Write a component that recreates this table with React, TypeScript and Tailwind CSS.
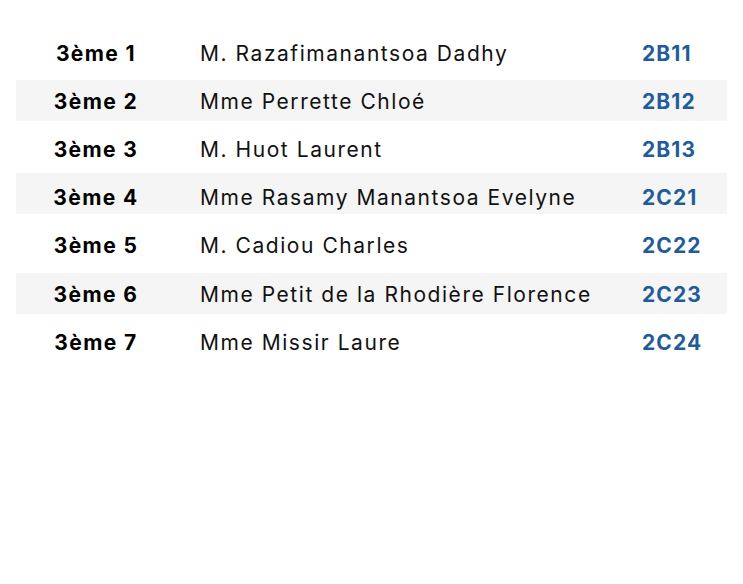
import React from "react";

const rows = [
  { c: "3ème 1", n: "M. Razafimanantsoa Dadhy", r: "2B11", gray: false, h: "h-[48px]", pt: "pt-[10px]" },
  { c: "3ème 2", n: "Mme Perrette Chloé", r: "2B12", gray: true, h: "h-[41px]", pt: "pt-[10px]" },
  { c: "3ème 3", n: "M. Huot Laurent", r: "2B13", gray: false, h: "h-[52px]", pt: "pt-[17px]" },
  { c: "3ème 4", n: "Mme Rasamy Manantsoa Evelyne", r: "2C21", gray: true, h: "h-[41px]", pt: "pt-[13px]" },
  { c: "3ème 5", n: "M. Cadiou Charles", r: "2C22", gray: false, h: "h-[59px]", pt: "pt-[20px]" },
  { c: "3ème 6", n: "Mme Petit de la Rhodière Florence", r: "2C23", gray: true, h: "h-[41px]", pt: "pt-[10px]" },
  { c: "3ème 7", n: "Mme Missir Laure", r: "2C24", gray: false, h: "h-[48px]", pt: "pt-[17px]" },
];

export default function App() {
  return (
    <div
      className="w-[743px] h-[584px] bg-white px-4 pt-[32px]"
      style={{ fontFamily: "Inter, 'Noto Sans', sans-serif" }}
    >
      <div className="flex flex-col">
        {rows.map((row) => (
          <div
            key={row.c}
            className={`flex items-start ${row.h} ${row.pt} ${row.gray ? "bg-[#f5f5f5]" : "bg-white"}`}
          >
            <div className="w-[160px] text-center text-[21px] leading-[24px] tracking-[1.4px] font-bold text-black">
              {row.c}
            </div>
            <div className="flex-1 ml-[24px] text-[21px] leading-[24px] tracking-[1.55px] text-[#111] font-normal">
              {row.n}
            </div>
            <div className="w-[85px] text-[21px] leading-[24px] tracking-[1.1px] font-bold text-[#1f5c99]">
              {row.r}
            </div>
          </div>
        ))}
      </div>
    </div>
  );
}
